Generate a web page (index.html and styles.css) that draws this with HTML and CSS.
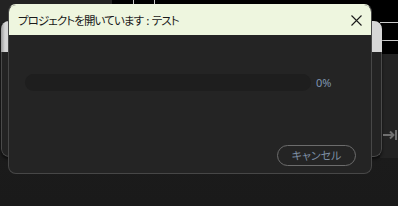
FILE: index.html
```html
<!DOCTYPE html>
<html lang="ja">
<head>
<meta charset="utf-8">
<title>プロジェクトを開いています</title>
<link rel="stylesheet" href="styles.css">
</head>
<body>
<div class="desk">
  <div class="desk-top-left"></div>
  <div class="desk-top-right"></div>
  <div class="desk-right-lower"></div>
  <div class="vline vline-a"></div>
  <div class="vline vline-b"></div>
  <div class="hline hline-a"></div>
  <div class="hline hline-b"></div>

  <div class="back-window">
    <div class="back-title"></div>
    <div class="back-body"></div>
  </div>

  <svg class="dock-icon" width="16" height="10" viewBox="0 0 16 10">
    <path d="M0 5H10" stroke="#6f6f6f" stroke-width="2"/>
    <path d="M7 1.5L10.5 5L7 8.5" stroke="#6f6f6f" stroke-width="2" fill="none"/>
    <path d="M13 0V10" stroke="#6f6f6f" stroke-width="2"/>
  </svg>

  <div class="dialog">
    <div class="dialog-title">
      <span class="title-text">プロジェクトを開いています : テスト</span>
      <svg class="close" width="11" height="11" viewBox="0 0 11 11">
        <path d="M0.5 0.5L10.5 10.5M10.5 0.5L0.5 10.5" stroke="#1b1b1b" stroke-width="1.1"/>
      </svg>
    </div>
    <div class="dialog-body">
      <div class="progress-row">
        <div class="track"><div class="fill" style="width:0%"></div></div>
        <span class="percent">0%</span>
      </div>
      <div class="actions">
        <button class="cancel">キャンセル</button>
      </div>
    </div>
  </div>
</div>
</body>
</html>
```

FILE: styles.css
```css
html, body {
  margin: 0;
  padding: 0;
}
body {
  width: 398px;
  height: 206px;
  overflow: hidden;
  background: #1b1b1b;
  font-family: "Noto Sans CJK JP", "Noto Sans", sans-serif;
}
.desk {
  position: relative;
  width: 398px;
  height: 206px;
  background: linear-gradient(#1e1e1e, #1a1a1a);
}
.desk-top-left {
  position: absolute;
  left: 0; top: 0;
  width: 112px; height: 24px;
  background: #232323;
}
.desk-top-right {
  position: absolute;
  left: 112px; top: 0;
  right: 0; height: 54px;
  background: #000;
}
.desk-right-lower {
  position: absolute;
  left: 380px; top: 54px;
  right: 0; height: 104px;
  background: #232323;
}
.vline {
  position: absolute;
  top: 0;
  width: 1px; height: 20px;
  background: #c9c9c9;
}
.vline-a { left: 133px; }
.vline-b { left: 154px; }
.hline {
  position: absolute;
  left: 380px; right: 0;
  height: 1px;
  background: #c9c9c9;
}
.hline-a { top: 22px; }
.hline-b { top: 40px; }

.back-window {
  position: absolute;
  left: 1px; top: 21px;
  width: 381px; height: 136px;
  border-radius: 8px;
  overflow: hidden;
  display: flex;
  flex-direction: column;
  box-shadow: 0 2px 3px rgba(0,0,0,0.6);
}
.back-title {
  height: 31px;
  background: linear-gradient(90deg, #9a9a9a, #d6d6d6 4px, #d6d6d6);
}
.back-body {
  flex: 1;
  background: #232323;
  border: 1px solid #4a4a4a;
  border-top: none;
  border-radius: 0 0 8px 8px;
}
.dock-icon {
  position: absolute;
  left: 383px; top: 130px;
}

.dialog {
  position: absolute;
  left: 8px; top: 4px;
  width: 364px; height: 170px;
  box-sizing: border-box;
  border-radius: 8px;
  overflow: hidden;
  display: flex;
  flex-direction: column;
  background: #242424;
  border: 1px solid #474747;
  border-top-color: #eef6df;
}
.dialog-title {
  height: 30px;
  flex: none;
  background: #eef6df;
  display: flex;
  align-items: center;
  justify-content: space-between;
  padding: 1px 10px 0 10px;
  margin: -1px -1px 0 -1px;
}
.title-text {
  font-size: 11.5px;
  color: #1a1a1a;
  font-feature-settings: "palt";
  letter-spacing: -0.9px;
  word-spacing: 1.5px;
}
.dialog-body {
  flex: 1;
  display: flex;
  flex-direction: column;
  justify-content: space-between;
  padding: 39px 15px 7px 16px;
}
.progress-row {
  display: flex;
  align-items: center;
  gap: 5px;
}
.track {
  width: 286px;
  height: 17px;
  border-radius: 9px;
  background: #1e1e1e;
  overflow: hidden;
}
.fill {
  height: 100%;
  background: #4a7fc0;
}
.percent {
  font-family: "Noto Sans", sans-serif;
  font-size: 11px;
  color: #7f95b0;
  line-height: 17px;
}
.actions {
  display: flex;
  justify-content: flex-end;
}
.cancel {
  width: 79px;
  height: 21px;
  box-sizing: border-box;
  border: 1px solid #6c6c6c;
  border-radius: 11px;
  background: transparent;
  color: #7d8ea3;
  font-family: "Noto Sans CJK JP", sans-serif;
  font-size: 11px;
  font-feature-settings: "palt";
  padding: 0;
  line-height: 19px;
}
```
